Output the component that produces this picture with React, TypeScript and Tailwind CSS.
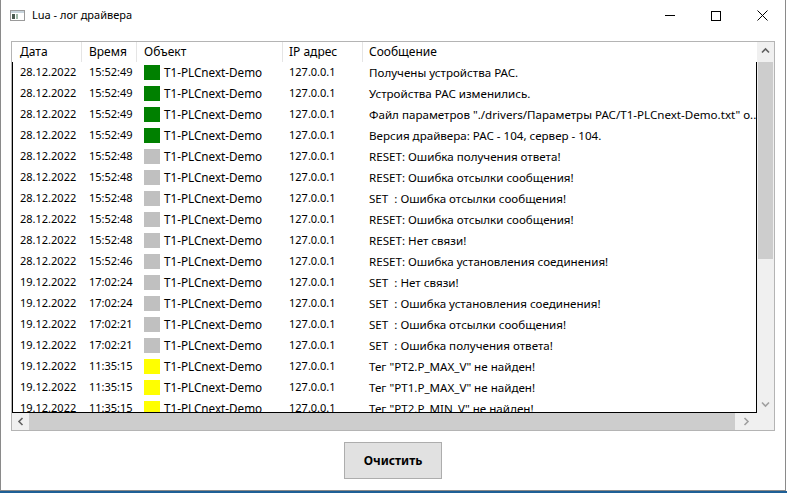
import React from "react";

type Row = { date: string; time: string; color: string; msg: string };

const G = "bg-[#008000]";
const S = "bg-[#c0c0c0]";
const Y = "bg-[#ffff00]";

const rows: Row[] = [
  { date: "28.12.2022", time: "15:52:49", color: G, msg: "Получены устройства PAC." },
  { date: "28.12.2022", time: "15:52:49", color: G, msg: "Устройства PAC изменились." },
  { date: "28.12.2022", time: "15:52:49", color: G, msg: "Файл параметров \"./drivers/Параметры PAC/T1-PLCnext-Demo.txt\" о..." },
  { date: "28.12.2022", time: "15:52:49", color: G, msg: "Версия драйвера: PAC - 104, сервер - 104." },
  { date: "28.12.2022", time: "15:52:48", color: S, msg: "RESET: Ошибка получения ответа!" },
  { date: "28.12.2022", time: "15:52:48", color: S, msg: "RESET: Ошибка отсылки сообщения!" },
  { date: "28.12.2022", time: "15:52:48", color: S, msg: "SET  : Ошибка отсылки сообщения!" },
  { date: "28.12.2022", time: "15:52:48", color: S, msg: "RESET: Ошибка отсылки сообщения!" },
  { date: "28.12.2022", time: "15:52:48", color: S, msg: "RESET: Нет связи!" },
  { date: "28.12.2022", time: "15:52:46", color: S, msg: "RESET: Ошибка установления соединения!" },
  { date: "19.12.2022", time: "17:02:24", color: S, msg: "SET  : Нет связи!" },
  { date: "19.12.2022", time: "17:02:24", color: S, msg: "SET  : Ошибка установления соединения!" },
  { date: "19.12.2022", time: "17:02:21", color: S, msg: "SET  : Ошибка отсылки сообщения!" },
  { date: "19.12.2022", time: "17:02:21", color: S, msg: "SET  : Ошибка получения ответа!" },
  { date: "19.12.2022", time: "11:35:15", color: Y, msg: "Тег \"PT2.P_MAX_V\" не найден!" },
  { date: "19.12.2022", time: "11:35:15", color: Y, msg: "Тег \"PT1.P_MAX_V\" не найден!" },
  { date: "19.12.2022", time: "11:35:15", color: Y, msg: "Тег \"PT2.P_MIN_V\" не найден!" },
];

function Chevron({ dir, dark }: { dir: "up" | "down" | "left" | "right"; dark?: boolean }) {
  const rot = { up: 0, down: 180, left: 270, right: 90 }[dir];
  return (
    <svg width="9" height="9" viewBox="0 0 9 9" style={{ transform: `rotate(${rot}deg)` }}>
      <path d="M1 6.5 L4.5 3 L8 6.5" fill="none" stroke={dark ? "#606060" : "#a0a0a0"} strokeWidth="1.6" />
    </svg>
  );
}

export default function App() {
  return (
    <div className="w-[787px] h-[493px] bg-white flex flex-col overflow-hidden text-[12px] text-black" style={{ fontFamily: '"Noto Sans", "Liberation Sans", sans-serif' }}>
      <div className="w-[786px] h-[491px] border-l border-r border-b border-[#8a8a8a] flex flex-col">
        {/* Title bar */}
        <div className="h-[31px] flex items-center pl-[9px] shrink-0">
          <svg width="15" height="11" viewBox="0 0 15 11">
            <rect x="0.5" y="0.5" width="14" height="10" fill="#fff" stroke="#9a9a9a" />
            <rect x="1" y="1" width="13" height="2" fill="#c8d4dc" />
            <rect x="2" y="4" width="3" height="5" fill="#4a5a50" />
            <rect x="6" y="4" width="2" height="5" fill="#9fb8a8" />
          </svg>
          <span className="ml-[7px] text-[11px]">Lua - лог драйвера</span>
          <div className="ml-auto flex h-full">
            <div className="w-[46px] h-full flex items-center justify-center">
              <div className="w-[10px] h-px bg-black" />
            </div>
            <div className="w-[46px] h-full flex items-center justify-center">
              <div className="w-[10px] h-[10px] border border-black" />
            </div>
            <div className="w-[46px] h-full flex items-center justify-center">
              <svg width="11" height="11" viewBox="0 0 11 11">
                <path d="M0.5 0.5 L10.5 10.5 M10.5 0.5 L0.5 10.5" stroke="#000" strokeWidth="1" />
              </svg>
            </div>
          </div>
        </div>

        {/* List */}
        <div className="ml-[10px] mt-[10px] w-[764px] h-[390px] border border-[#b4b4b4] flex">
          <div className="w-[745px] flex flex-col">
            <div className="h-[20px] flex items-center shrink-0">
              <div className="w-[70px] h-full border-r border-[#e5e5e5] pl-[8px] flex items-center">Дата</div>
              <div className="w-[55px] h-full border-r border-[#e5e5e5] pl-[7px] flex items-center">Время</div>
              <div className="w-[146px] h-full border-r border-[#e5e5e5] pl-[7px] flex items-center">Объект</div>
              <div className="w-[80px] h-full border-r border-[#e5e5e5] pl-[6px] flex items-center">IP адрес</div>
              <div className="flex-1 h-full pl-[6px] flex items-center">Сообщение</div>
            </div>
            <div className="h-[351px] border-l border-r border-b border-black overflow-hidden">
              {rows.map((r, i) => (
                <div key={i} className="h-[21px] flex items-center whitespace-pre">
                  <div className="w-[69px] pl-[7px] text-[11px]">{r.date}</div>
                  <div className="w-[55px] pl-[7px] text-[11px]">{r.time}</div>
                  <div className="w-[146px] pl-[7px] flex items-center text-[11.7px]">
                    <div className={`w-[16px] h-[15px] shrink-0 ${r.color}`} />
                    <span className="ml-[4px]">T1-PLCnext-Demo</span>
                  </div>
                  <div className="w-[80px] pl-[6px] text-[11px]">127.0.0.1</div>
                  <div className="flex-1 pl-[6px] overflow-hidden text-[11.6px]">{r.msg}</div>
                </div>
              ))}
            </div>
            {/* horizontal scrollbar */}
            <div className="h-[17px] bg-[#f0f0f0] flex items-center shrink-0">
              <div className="w-[17px] h-full flex items-center justify-center">
                <Chevron dir="left" dark />
              </div>
              <div className="w-[706px] h-full bg-[#cdcdcd]" />
              <div className="flex-1 h-full flex items-center justify-center">
                <Chevron dir="right" />
              </div>
            </div>
          </div>
          {/* vertical scrollbar */}
          <div className="w-[17px] flex flex-col">
            <div className="h-[371px] bg-[#f0f0f0] flex flex-col">
              <div className="h-[17px] flex items-center justify-center">
                <Chevron dir="up" dark />
              </div>
              <div className="mt-[3px] mx-[1px] h-[197px] bg-[#cdcdcd]" />
              <div className="mt-auto h-[17px] flex items-center justify-center">
                <Chevron dir="down" />
              </div>
            </div>
            <div className="flex-1 bg-[#f0f0f0]" />
          </div>
        </div>

        {/* Button */}
        <div className="flex justify-center mt-[11px]">
          <button className="w-[98px] h-[37px] bg-[#e1e1e1] border border-[#adadad] font-bold">Очистить</button>
        </div>
      </div>
      <div className="h-[2px] bg-[#1e5f96]" />
    </div>
  );
}
